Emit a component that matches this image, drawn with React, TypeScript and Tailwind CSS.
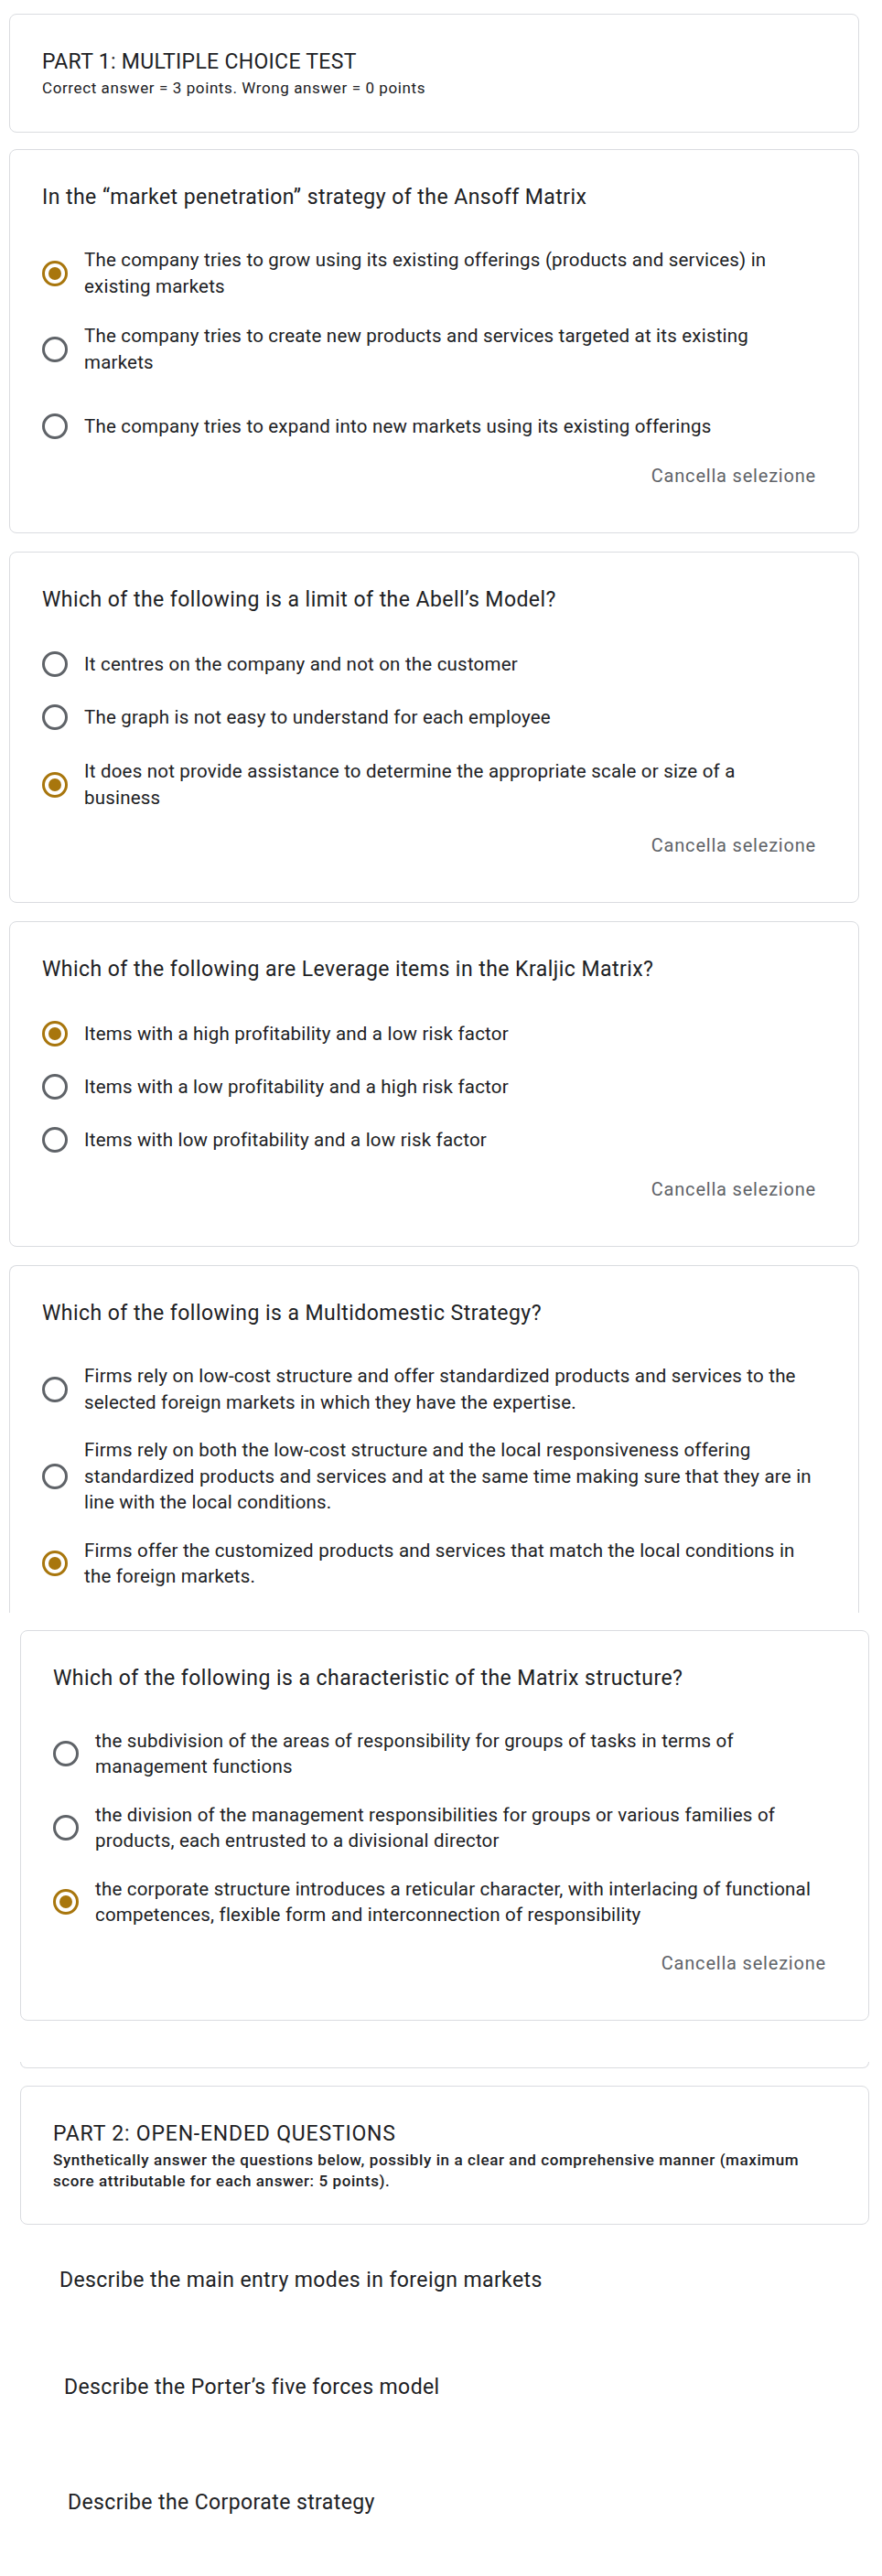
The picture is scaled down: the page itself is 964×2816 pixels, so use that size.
const TITLE_FONT = "font-['Roboto','Liberation_Sans',sans-serif]";

type Question = {
  title: string;
  // "\n" marks where the line wraps in the original
  options: string[];
  selected: number;
  gap: string;
  extra?: { index: number; cls: string };
};

const PART1: (Question & { mt: string })[] = [
  {
    title: "In the “market penetration” strategy of the Ansoff Matrix",
    options: [
      "The company tries to grow using its existing offerings (products and services) in\nexisting markets",
      "The company tries to create new products and services targeted at its existing\nmarkets",
      "The company tries to expand into new markets using its existing offerings",
    ],
    selected: 0,
    gap: "gap-[26px]",
    extra: { index: 2, cls: "mt-[14px]" },
    mt: "mt-[18px]",
  },
  {
    title: "Which of the following is a limit of the Abell’s Model?",
    options: [
      "It centres on the company and not on the customer",
      "The graph is not easy to understand for each employee",
      "It does not provide assistance to determine the appropriate scale or size of a\nbusiness",
    ],
    selected: 2,
    gap: "gap-[26px]",
    extra: { index: 2, cls: "mt-[3px]" },
    mt: "mt-[20px]",
  },
  {
    title: "Which of the following are Leverage items in the Kraljic Matrix?",
    options: [
      "Items with a high profitability and a low risk factor",
      "Items with a low profitability and a high risk factor",
      "Items with low profitability and a low risk factor",
    ],
    selected: 0,
    gap: "gap-[26px]",
    mt: "mt-[20px]",
  },
];

const MULTIDOMESTIC: Question = {
  title: "Which of the following is a Multidomestic Strategy?",
  options: [
    "Firms rely on low-cost structure and offer standardized products and services to the\nselected foreign markets in which they have the expertise.",
    "Firms rely on both the low-cost structure and the local responsiveness offering\nstandardized products and services and at the same time making sure that they are in\nline with the local conditions.",
    "Firms offer the customized products and services that match the local conditions in\nthe foreign markets.",
  ],
  selected: 2,
  gap: "gap-[24px]",
};

const MATRIX: Question = {
  title: "Which of the following is a characteristic of the Matrix structure?",
  options: [
    "the subdivision of the areas of responsibility for groups of tasks in terms of\nmanagement functions",
    "the division of the management responsibilities for groups or various families of\nproducts, each entrusted to a divisional director",
    "the corporate structure introduces a reticular character, with interlacing of functional\ncompetences, flexible form and interconnection of responsibility",
  ],
  selected: 2,
  gap: "gap-[24px]",
};

function Radio({ checked }: { checked: boolean }) {
  if (checked) {
    return (
      <div className="w-[28px] h-[28px] shrink-0 rounded-full border-[3px] border-[#a8760d] flex items-center justify-center">
        <div className="w-[14px] h-[14px] rounded-full bg-[#a8760d]" />
      </div>
    );
  }
  return <div className="w-[28px] h-[28px] shrink-0 rounded-full border-[3px] border-[#5f6368]" />;
}

function Options({ q }: { q: Question }) {
  return (
    <div className={`mt-[38px] flex flex-col ${q.gap}`}>
      {q.options.map((opt, i) => (
        <div
          key={i}
          className={`flex items-center gap-[18px] min-h-[32px] ${q.extra && q.extra.index === i ? q.extra.cls : ""}`}
        >
          <Radio checked={i === q.selected} />
          <span className="whitespace-pre-line text-[20.5px] leading-[28.5px] tracking-[0.2px] text-[#202124] font-['Roboto',sans-serif]">
            {opt}
          </span>
        </div>
      ))}
    </div>
  );
}

function QuestionTitle({ children }: { children: string }) {
  return (
    <h3 className={`${TITLE_FONT} text-[23px] leading-[32px] tracking-[0.45px] text-[#202124]`}>{children}</h3>
  );
}

function Clear() {
  return (
    <div className="mt-[24px] flex justify-end">
      <span className="mr-[11px] text-[20px] leading-[28px] tracking-[0.8px] text-[#5f6368] font-['Roboto',sans-serif]">
        Cancella selezione
      </span>
    </div>
  );
}

export default function App() {
  return (
    <div className="w-[964px] bg-white pb-[60px]">
      {/* part 1 header */}
      <div className="ml-[10px] mt-[15px] w-[929px] rounded-[8px] border border-[#dadce0] px-[35px] pt-[36px] pb-[36px]">
        <h2 className={`${TITLE_FONT} text-[23px] leading-[32px] tracking-[0.3px] text-[#202124]`}>
          PART 1: MULTIPLE CHOICE TEST
        </h2>
        <p className="mt-[1px] text-[17px] leading-[23px] tracking-[0.6px] text-[#202124] font-['Roboto',sans-serif]">
          Correct answer = 3 points. Wrong answer = 0 points
        </p>
      </div>

      {PART1.map((q) => (
        <div
          key={q.title}
          className={`ml-[10px] w-[929px] rounded-[8px] border border-[#dadce0] px-[35px] pt-[36px] pb-[48px] ${q.mt}`}
        >
          <QuestionTitle>{q.title}</QuestionTitle>
          <Options q={q} />
          <Clear />
        </div>
      ))}

      {/* cut off at the bottom in the original */}
      <div className="ml-[10px] mt-[20px] w-[929px] rounded-t-[8px] border-x border-t border-[#dadce0] px-[35px] pt-[36px] pb-[25px]">
        <QuestionTitle>{MULTIDOMESTIC.title}</QuestionTitle>
        <Options q={MULTIDOMESTIC} />
      </div>

      <div className="ml-[22px] mt-[19px] w-[928px] rounded-[8px] border border-[#dadce0] px-[35px] pt-[36px] pb-[48px]">
        <QuestionTitle>{MATRIX.title}</QuestionTitle>
        <Options q={MATRIX} />
        <Clear />
      </div>

      <div className="ml-[22px] mt-[45px] w-[928px] h-[7px] rounded-b-[8px] border-x border-b border-[#dadce0]" />

      {/* part 2 header */}
      <div className="ml-[22px] mt-[19px] w-[928px] rounded-[8px] border border-[#dadce0] px-[35px] pt-[36px] pb-[35px]">
        <h2 className={`${TITLE_FONT} text-[23px] leading-[32px] tracking-[0.8px] text-[#202124]`}>
          PART 2: OPEN-ENDED QUESTIONS
        </h2>
        <p className="mt-[1px] whitespace-pre-line text-[17px] leading-[23px] tracking-[0.6px] font-medium text-[#202124] font-['Roboto',sans-serif]">
          {"Synthetically answer the questions below, possibly in a clear and comprehensive manner (maximum\nscore attributable for each answer: 5 points)."}
        </p>
      </div>

      <div className={`${TITLE_FONT} text-[23px] leading-[32px] tracking-[0.4px] text-[#202124]`}>
        <p className="ml-[65px] mt-[45px]">Describe the main entry modes in foreign markets</p>
        <p className="ml-[70px] mt-[85px]">Describe the Porter’s five forces model</p>
        <p className="ml-[74px] mt-[94px]">Describe the Corporate strategy</p>
      </div>
    </div>
  );
}
